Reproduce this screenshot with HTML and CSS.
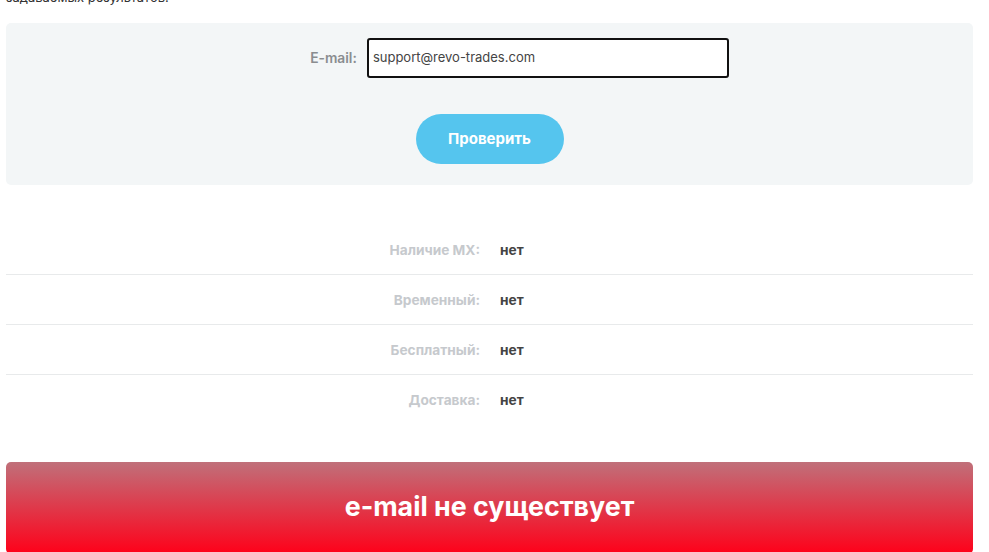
FILE: index.html
```html
<!DOCTYPE html>
<html lang="ru">
<head>
<meta charset="utf-8">
<link rel="stylesheet" href="styles.css">
</head>
<body>
<div class="page">
  <p class="intro">задаваемых результатов.</p>
  <form class="panel">
    <div class="field">
      <label class="field-label" for="email">E-mail:</label>
      <input class="field-input" id="email" type="text" value="support@revo-trades.com">
    </div>
    <button class="check-btn" type="button">Проверить</button>
  </form>
  <div class="results">
    <div class="row"><span class="row-label">Наличие MX:</span><span class="row-value">нет</span></div>
    <div class="row"><span class="row-label">Временный:</span><span class="row-value">нет</span></div>
    <div class="row"><span class="row-label">Бесплатный:</span><span class="row-value">нет</span></div>
    <div class="row"><span class="row-label">Доставка:</span><span class="row-value">нет</span></div>
  </div>
  <div class="verdict">e-mail не существует</div>
</div>
</body>
</html>
```
FILE: styles.css
```css
html, body {
  margin: 0;
  padding: 0;
  background: #fff;
  overflow: hidden;
}
body {
  font-family: Inter, "Noto Sans", sans-serif;
  color: #333;
}
.page {
  width: 967px;
  margin-left: 6px;
}
.intro {
  margin: -11px 0 0 0;
  height: 16px;
  line-height: 16px;
  font-size: 13px;
  color: #333;
}
.panel {
  margin: 18px 0 0 0;
  background: #f3f6f7;
  border-radius: 5px;
  height: 162px;
  box-sizing: border-box;
  padding-top: 15px;
  display: flex;
  flex-direction: column;
  align-items: center;
}
.field {
  display: flex;
  align-items: center;
  gap: 10px;
  margin-left: 60px;
}
.field-label {
  font-size: 13.8px;
  font-weight: 600;
  color: #8a8d90;
}
.field-input {
  width: 362px;
  height: 40px;
  box-sizing: border-box;
  border: 2px solid #111;
  border-radius: 3px;
  padding: 0 4px 2px;
  font-family: inherit;
  font-size: 13px;
  color: #444;
  background: #fff;
}
.check-btn {
  margin-top: 36px;
  width: 148px;
  height: 50px;
  border: none;
  border-radius: 25px;
  background: #55c5ee;
  color: #fff;
  font-family: inherit;
  font-size: 15px;
  font-weight: 700;
  padding-bottom: 2px;
}
.results {
  margin-top: 40px;
}
.row {
  display: grid;
  grid-template-columns: 474px 1fr;
  column-gap: 20px;
  align-items: center;
  height: 50px;
  box-sizing: border-box;
  border-bottom: 1px solid #e8eaeb;
  font-size: 13.7px;
  font-weight: 700;
}
.row:last-child {
  border-bottom: none;
}
.row-label {
  text-align: right;
  color: #c6c9cd;
}
.row-value {
  color: #444;
}
.verdict {
  margin-top: 37px;
  height: 92px;
  border-radius: 5px;
  background: linear-gradient(to bottom, #c0707a, #ff0019);
  color: #fff;
  font-size: 26.8px;
  font-weight: 700;
  display: flex;
  align-items: center;
  justify-content: center;
  padding-bottom: 5px;
  box-sizing: border-box;
}
```
